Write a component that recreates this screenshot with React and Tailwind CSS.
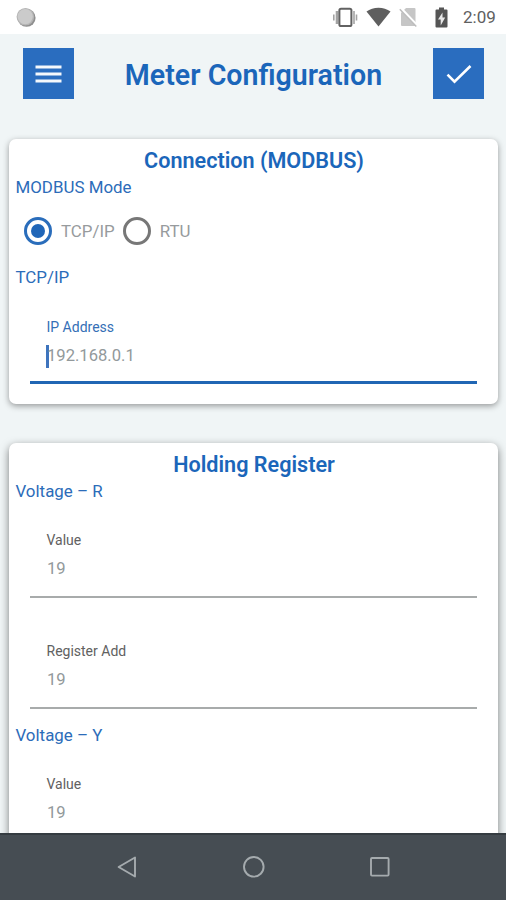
import { clsx } from 'clsx'

const registers = [
  { name: 'Voltage – R', fields: [{ label: 'Value', value: '19' }, { label: 'Register Add', value: '19' }] },
  { name: 'Voltage – Y', fields: [{ label: 'Value', value: '19' }] },
]

function StatusBar() {
  return (
    <div className="flex h-[34px] shrink-0 items-center bg-white pl-4 pr-[10px]">
      <svg className="h-5 w-5" viewBox="0 0 20 20">
        <circle cx="10.6" cy="10.8" r="9" fill="#8f8f8f" />
        <circle cx="9.4" cy="9.8" r="8.8" fill="#b4b4b4" />
        <circle cx="9.2" cy="9.6" r="7.6" fill="#cbcbcb" />
      </svg>
      <div className="ml-auto flex items-center">
        {/* vibrate */}
        <svg className="h-5 w-[26px]" viewBox="0 0 26 20">
          <path d="M4.100 4v13" stroke="#a3a3a3" strokeWidth="2.800" />
          <path d="M21 4v13M.8 7.500v6M23.500 7.500v6" stroke="#a3a3a3" strokeWidth="1.600" />
          <rect x="6.400" y="1.700" width="12" height="17.300" rx="1.600" fill="#fff" stroke="#626262" strokeWidth="2" />
        </svg>
        {/* wifi */}
        <svg className="ml-[7px] h-5 w-[25px]" viewBox="0 0 25 20">
          <path d="M.5 4.600C3.800 2.100 8 .8 12.500.8s8.700 1.300 12 3.800L12.500 19.400z" fill="#5f5f5f" />
        </svg>
        {/* no sim */}
        <svg className="ml-2 h-5 w-[19px]" viewBox="0 0 19 20">
          <path d="M7 1h8.500q1 0 1 1v17H3q-1 0-1-1V6z" fill="#c6c6c6" />
          <path d="M2 1.500L19 19.500" stroke="#fff" strokeWidth="2.600" />
          <path d="M.8 2.200L17.300 19.500" stroke="#bdbdbd" strokeWidth="1.500" />
        </svg>
        {/* battery */}
        <svg className="ml-[17px] h-[21px] w-[13px]" viewBox="0 0 13 21">
          <path d="M4 .5h5v2h2.500q1 0 1 1v16q0 1-1 1h-10q-1 0-1-1v-16q0-1 1-1H4z" fill="#555" />
          <path d="M7.500 5.500v5h2.700l-4.500 8v-6H3z" fill="#e8e8e8" />
        </svg>
        <span className="ml-[15px] w-[33px] whitespace-nowrap text-[17px] leading-5 text-[#606060]">2:09</span>
      </div>
    </div>
  )
}

function Header() {
  return (
    <header className="flex shrink-0 items-center justify-between pb-10 pl-[23px] pr-[22px] pt-[14px]">
      <button aria-label="Menu" className="flex h-[51px] w-[51px] items-center justify-center bg-[#2a6dbf]">
        <svg className="h-5 w-[27px]" viewBox="0 0 27 20">
          <path d="M.5 3h26M.5 10h26M.5 17h26" stroke="#f4f8fc" strokeWidth="2.800" />
        </svg>
      </button>
      <h1 className="pt-1 text-[28.600px] font-semibold leading-[47px] text-[#1b66ba]">Meter Configuration</h1>
      <button aria-label="Save" className="flex h-[51px] w-[51px] items-center justify-center bg-[#2a6dbf] pl-[2px]">
        <svg className="h-5 w-[26px]" viewBox="0 0 26 20" fill="none">
          <path d="M1.500 10.700l7 7L24.500 2" stroke="#fff" strokeWidth="2.600" />
        </svg>
      </button>
    </header>
  )
}

function Card({ title, className, children }) {
  return (
    <section className={clsx('ml-[9px] mr-2 shrink-0 rounded-[7px] bg-white pt-2', className)}>
      <h2 className="pl-[1px] text-center text-[21.600px] font-semibold leading-7 text-[#1b66ba]">{title}</h2>
      {children}
    </section>
  )
}

function SectionLabel({ children }) {
  return <h3 className="pl-[6.500px] text-[16.900px] leading-6 text-[#2c6cb9]">{children}</h3>
}

function Radio({ label, checked }) {
  return (
    <label className="flex items-center">
      <span className={clsx('flex h-7 w-7 items-center justify-center rounded-full border-3', checked ? 'border-[#2a6dbb]' : 'border-[#777]')}>
        {checked && <span className="h-[14px] w-[14px] rounded-full bg-[#2066b8]" />}
      </span>
      <span className="ml-[9px] text-[16.900px] leading-6 text-[#979b9d]">{label}</span>
    </label>
  )
}

function Field({ label, value, focused }) {
  return (
    <div
      className={clsx(
        'mx-[21px] pl-4',
        focused
          ? 'border-b-[3px] border-[#2066b4] pb-[13px] pt-7'
          : 'mb-4 border-b-2 border-[#a8abab] pb-[15px] pt-[27px] last:mb-[14px]'
      )}
    >
      <p className={clsx('pl-[.5px] text-[14px] leading-5', focused ? 'text-[#356fb6]' : 'text-[#616161]')}>{label}</p>
      <div className="mt-[7px] flex items-center">
        {focused && <span className="-mr-[3px] h-[23px] w-[3px] bg-[#3e74bd]" />}
        <span className="pl-[1px] text-[16.600px] leading-6 text-[#92999b]">{value}</span>
      </div>
    </div>
  )
}

function NavBar() {
  return (
    <nav className="flex h-[67px] shrink-0 items-start justify-center gap-[102px] border-t-2 border-[#353c41] bg-[#464d53] pl-[2px] pt-5">
      <svg className="h-6 w-6" viewBox="0 0 24 24" fill="none" stroke="#a5abae" strokeWidth="1.900" strokeLinejoin="round">
        <path d="M19 2.500v19L2.600 12z" />
      </svg>
      <svg className="h-6 w-6" viewBox="0 0 24 24" fill="none" stroke="#a5abae" strokeWidth="1.900">
        <circle cx="11.800" cy="11.800" r="9.800" />
      </svg>
      <svg className="h-6 w-6" viewBox="0 0 24 24" fill="none" stroke="#a5abae" strokeWidth="1.900">
        <rect x="3" y="3" width="17.600" height="17.600" rx="1" />
      </svg>
    </nav>
  )
}

export default function App() {
  return (
    <div className="flex h-[900px] w-[506px] flex-col overflow-hidden bg-[#f0f5f6] font-['Roboto','Liberation_Sans',sans-serif]">
      <StatusBar />
      <main className="flex min-h-0 flex-1 flex-col overflow-hidden">
        <Header />
        <Card title="Connection (MODBUS)" className="pb-5 shadow-[0_2px_6px_rgba(0,0,0,0.38)]">
          <SectionLabel>MODBUS Mode</SectionLabel>
          <div className="mb-5 mt-[18px] flex gap-2 pl-[15px]">
            <Radio label="TCP/IP" checked />
            <Radio label="RTU" />
          </div>
          <SectionLabel>TCP/IP</SectionLabel>
          <Field label="IP Address" value="192.168.0.1" focused />
        </Card>
        <Card title="Holding Register" className="mt-[39px] shadow-[0_3px_8px_rgba(0,0,0,0.5)]">
          {registers.map((register) => (
            <div key={register.name}>
              <SectionLabel>{register.name}</SectionLabel>
              {register.fields.map((field) => (
                <Field key={field.label} label={field.label} value={field.value} />
              ))}
            </div>
          ))}
        </Card>
      </main>
      <NavBar />
    </div>
  )
}
